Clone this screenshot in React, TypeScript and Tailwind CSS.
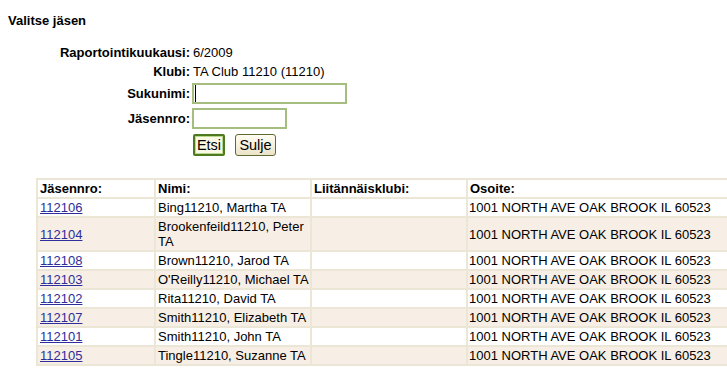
import React from "react";

type Member = {
  id: string;
  name: string;
  club: string;
  address: string;
};

const members: Member[] = [
  { id: "112106", name: "Bing11210, Martha TA", club: "", address: "1001 NORTH AVE OAK BROOK IL 60523" },
  { id: "112104", name: "Brookenfeild11210, Peter TA", club: "", address: "1001 NORTH AVE OAK BROOK IL 60523" },
  { id: "112108", name: "Brown11210, Jarod TA", club: "", address: "1001 NORTH AVE OAK BROOK IL 60523" },
  { id: "112103", name: "O'Reilly11210, Michael TA", club: "", address: "1001 NORTH AVE OAK BROOK IL 60523" },
  { id: "112102", name: "Rita11210, David TA", club: "", address: "1001 NORTH AVE OAK BROOK IL 60523" },
  { id: "112107", name: "Smith11210, Elizabeth TA", club: "", address: "1001 NORTH AVE OAK BROOK IL 60523" },
  { id: "112101", name: "Smith11210, John TA", club: "", address: "1001 NORTH AVE OAK BROOK IL 60523" },
  { id: "112105", name: "Tingle11210, Suzanne TA", club: "", address: "1001 NORTH AVE OAK BROOK IL 60523" },
];

function Cell({ children, className = "" }: { children?: React.ReactNode; className?: string }) {
  return (
    <div className={"flex items-center px-[2px] py-[1px] leading-[15px] " + className}>
      {children}
    </div>
  );
}

export default function App() {
  return (
    <div className="h-[369px] w-[727px] overflow-hidden bg-white font-['Liberation_Sans',Arial,sans-serif] text-[13px] text-black">
      <h1 className="pl-[8px] pt-[13px] text-[13px] font-bold leading-[16px]">Valitse jäsen</h1>

      <div className="mt-[14px] flex flex-col">
        <div className="flex h-[19px] items-center">
          <div className="w-[190px] text-right font-bold">Raportointikuukausi:</div>
          <div className="pl-[3px]">6/2009</div>
        </div>
        <div className="flex h-[19px] items-center">
          <div className="w-[190px] text-right font-bold">Klubi:</div>
          <div className="pl-[3px]">TA Club 11210 (11210)</div>
        </div>
        <div className="flex h-[25px] items-center">
          <div className="w-[190px] text-right font-bold">Sukunimi:</div>
          <div className="relative ml-[2px]">
            <input
              type="text"
              className="block h-[21px] w-[155px] border-2 border-[#a6bd80] bg-white px-[2px] text-[13px] outline-none"
            />
            {/* text caret of the focused field */}
            <span className="pointer-events-none absolute left-[3px] top-[2px] h-[17px] w-px bg-black" />
          </div>
        </div>
        <div className="flex h-[25px] items-center">
          <div className="w-[190px] text-right font-bold">Jäsennro:</div>
          <input
            type="text"
            className="ml-[2px] h-[21px] w-[95px] border-2 border-[#a6bd80] bg-white px-[2px] text-[13px] outline-none"
          />
        </div>
        <div className="mt-[3px] flex h-[22px] items-center">
          <div className="w-[190px]" />
          <button
            type="button"
            className="ml-[3px] h-[22px] w-[32px] rounded-[2px] border-2 border-[#4d7a1f] bg-[#fbf8e4] text-[14.5px] leading-[16px] shadow-[inset_0_0_0_1px_#b9d88f]"
          >
            Etsi
          </button>
          <button
            type="button"
            className="ml-[10px] h-[22px] w-[41px] rounded-[3px] border border-[#5e6a31] bg-gradient-to-b from-[#fffdf2] to-[#ece4c9] text-[14.5px] leading-[18px]"
          >
            Sulje
          </button>
        </div>
      </div>

      <div className="ml-[36px] mt-[22px] grid w-[760px] grid-cols-[116px_154px_154px_1fr] gap-[2px] bg-[#ece6d6] p-[2px]">
        <Cell className="bg-white font-bold">Jäsennro:</Cell>
        <Cell className="bg-white font-bold">Nimi:</Cell>
        <Cell className="bg-white font-bold">Liitännäisklubi:</Cell>
        <Cell className="bg-white font-bold">Osoite:</Cell>
        {members.map((m, i) => {
          const bg = i % 2 === 0 ? "bg-white" : "bg-[#f7efe5]";
          return (
            <React.Fragment key={m.id}>
              <Cell className={bg}>
                <a href="#" className="text-[#2d2d9c] underline">
                  {m.id}
                </a>
              </Cell>
              <Cell className={bg + " pr-0"}>{m.name}</Cell>
              <Cell className={bg}>{m.club}</Cell>
              <Cell className={bg + " pl-[1px]"}>{m.address}</Cell>
            </React.Fragment>
          );
        })}
      </div>
    </div>
  );
}
